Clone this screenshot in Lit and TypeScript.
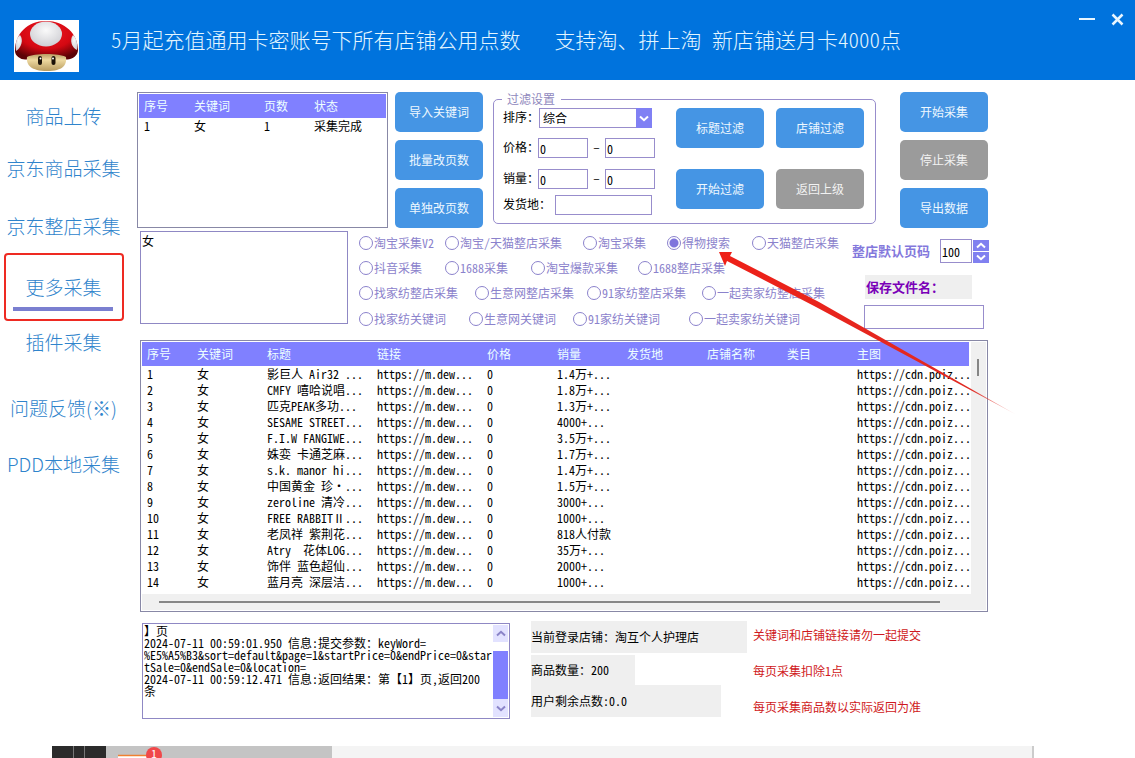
import { LitElement, html, css, svg } from "lit";
import { customElement, state } from "lit/decorators.js";

const NAV = ["商品上传", "京东商品采集", "京东整店采集", "更多采集", "插件采集", "问题反馈(※)", "PDD本地采集"];

const MODES: string[][] = [
  ["淘宝采集V2", "淘宝/天猫整店采集", "淘宝采集", "得物搜索", "天猫整店采集"],
  ["抖音采集", "1688采集", "淘宝爆款采集", "1688整店采集"],
  ["找家纺整店采集", "生意网整店采集", "91家纺整店采集", "一起卖家纺整店采集"],
  ["找家纺关键词", "生意网关键词", "91家纺关键词", "一起卖家纺关键词"],
];

const COLUMNS = ["序号", "关键词", "标题", "链接", "价格", "销量", "发货地", "店铺名称", "类目", "主图"];

const ITEMS: [string, string][] = [
  ["影巨人 Air32 ...", "1.4万+..."],
  ["CMFY 嘻哈说唱...", "1.8万+..."],
  ["匹克PEAK多功...", "1.3万+..."],
  ["SESAME STREET...", "4000+..."],
  ["F.I.W FANGIWE...", "3.5万+..."],
  ["姝娈 卡通芝麻...", "1.7万+..."],
  ["s.k. manor hi...", "1.4万+..."],
  ["中国黄金 珍・...", "1.5万+..."],
  ["zeroline 清冷...", "3000+..."],
  ["FREE RABBITⅡ...", "1000+..."],
  ["老凤祥 紫荆花...", "818人付款"],
  ["Atry  花体LOG...", "35万+..."],
  ["饰伴 蓝色超仙...", "2000+..."],
  ["蓝月亮 深层洁...", "1000+..."],
];

const LOG = `】页
2024-07-11 00:59:01.950 信息:提交参数：keyWord=
%E5%A5%B3&sort=default&page=1&startPrice=0&endPrice=0&star
tSale=0&endSale=0&location=
2024-07-11 00:59:12.471 信息:返回结果：第【1】页，返回200
条`;

const chevron = (up: boolean, color: string) => svg`
  <svg width="10" height="7" viewBox="0 0 10 7" aria-hidden="true">
    <path d=${up ? "M1 5.5 5 1.8 9 5.5" : "M1 1.5 5 5.2 9 1.5"} fill="none" stroke=${color} stroke-width="2"/>
  </svg>`;

@customElement("app-root")
export class AppRoot extends LitElement {
  @state() private mode = "得物搜索";

  static styles = css`
    :host {
      display: block;
      position: relative;
      overflow: hidden;
      background: #fff;
      color: #000;
      font-family: "Noto Sans CJK SC", sans-serif;
      font-size: 12px;
      line-height: 16px;
      font-feature-settings: "hwid";
      text-spacing-trim: space-all;
    }
    * { box-sizing: border-box; }
    input, select, textarea, button, legend {
      font: inherit;
      font-feature-settings: inherit;
      text-spacing-trim: inherit;
      color: inherit;
      margin: 0;
    }
    svg { display: block; }

    .titlebar {
      display: flex;
      align-items: center;
      height: 80px;
      padding-left: 14px;
      background: #0073dd;
      color: #e4f6ff;
    }
    .logo { margin-top: 12px; }
    .notice {
      display: flex;
      flex: 1;
      gap: 34px;
      margin-left: 32px;
      padding-bottom: 3px;
      font-size: 21px;
      font-weight: 300;
      line-height: 30px;
      white-space: nowrap;
    }
    .window {
      display: flex;
      align-self: flex-start;
      gap: 14px;
      padding: 10px 9px 0 0;
    }
    .window button { padding: 0; border: 0; background: none; }

    .body { display: flex; }
    .nav {
      display: grid;
      grid-template-rows: 52px 52px 64px 58px 52px 80px 32px;
      align-content: start;
      width: 127px;
      padding-top: 10px;
      font-size: 19px;
      font-weight: 300;
      font-feature-settings: normal;
    }
    .nav a {
      display: flex;
      align-items: center;
      justify-content: center;
      color: #2f84cc;
      text-decoration: none;
      white-space: nowrap;
    }
    .nav .current { position: relative; }
    .current::before {
      content: "";
      position: absolute;
      inset: -5px 3px -5px 4px;
      border: 2px solid #ee2a22;
      border-radius: 4px;
    }
    .current::after {
      content: "";
      position: absolute;
      inset: auto 14px 5px 13px;
      height: 4px;
      background: #7a7fd0;
    }

    .main { flex: 1; min-width: 0; padding: 12px 147px 0 10px; }
    .top { display: flex; height: 136px; }
    .stack { display: grid; gap: 8px; align-content: start; }
    .top .stack { margin-left: 7px; }
    .top .last { margin-left: 24px; }
    .btn {
      width: 88px;
      height: 40px;
      padding: 0;
      border: 0;
      border-radius: 5px;
      background: #4595e4;
      color: #eef8ff;
    }
    .btn.off { background: #9b9b9b; color: #f2f2f2; }

    .frame { border: 1px solid #8888a6; padding: 1px; background: #fff; }
    table { width: 100%; border-collapse: collapse; table-layout: fixed; }
    th {
      height: 24px;
      padding: 0 0 0 5px;
      background: #8080ff;
      color: #eeffff;
      font-weight: 400;
      text-align: left;
      white-space: nowrap;
    }
    td {
      height: 16px;
      padding: 0 0 0 5px;
      line-height: 16px;
      white-space: pre;
    }
    .keywords { flex: 1; min-width: 0; }
    .w50 { width: 50px; }
    .w70 { width: 70px; }
    .w80 { width: 80px; }
    .w110 { width: 110px; }

    .filter {
      display: flex;
      gap: 20px;
      width: 383px;
      height: 132px;
      margin: 0 0 0 10px;
      padding: 2px 10px 0 9px;
      border: 1px solid #988dcc;
      border-radius: 5px;
    }
    .filter legend {
      margin-left: -1px;
      padding: 0 6px 0 5px;
      line-height: 14px;
      color: #8f88bd;
    }
    .fields {
      display: grid;
      grid-template-rows: 30px 31px 26px 20px;
      width: 153px;
    }
    .field { display: flex; align-items: center; height: 20px; }
    .field label, .dash { padding-bottom: 3px; white-space: nowrap; }
    .dash { width: 17px; text-align: center; }
    .box {
      height: 20px;
      padding: 0 0 0 1px;
      border: 1px solid #988dcc;
      border-radius: 0;
      background: #fff;
      outline: 0;
    }
    .num { width: 50px; }
    .num.first { margin-left: -1px; }
    .place { width: 97px; margin-left: 4px; }
    .select {
      display: flex;
      align-items: center;
      justify-content: flex-end;
      position: relative;
      width: 113px;
      height: 20px;
    }
    .select select {
      position: absolute;
      inset: 0;
      width: 100%;
      padding-left: 3px;
      border: 1px solid #988dcc;
      border-radius: 0;
      background: #fff;
      appearance: none;
    }
    .arrow {
      display: grid;
      place-items: center;
      position: relative;
      width: 16px;
      height: 20px;
      background: #8080f4;
      pointer-events: none;
    }
    .actions {
      display: grid;
      grid-template: 40px 40px / 88px 88px;
      gap: 21px 12px;
      align-content: start;
    }

    .middle { display: flex; margin-top: 3px; padding-left: 3px; }
    .words {
      flex: 1;
      min-width: 0;
      height: 93px;
      padding: 1px;
      border: 1px solid #8f88c4;
      background: #fff;
      resize: none;
      outline: 0;
    }
    .modes {
      display: grid;
      grid-template-rows: 24px 25px 25px 28px;
      width: 493px;
      margin: 0 0 0 11px;
      padding: 0;
      border: 0;
      color: #8b82cc;
    }
    .modes .row { display: grid; align-items: center; }
    .r0 { grid-template-columns: 86px 138px 84px 85px auto; }
    .r1 { grid-template-columns: 86px 86px 107px auto; }
    .r2 { grid-template-columns: 116px 112px 115px auto; }
    .r3 { grid-template-columns: 110px 104px 116px auto; }
    .mode { display: flex; align-items: center; gap: 1px; white-space: nowrap; }
    .mode input {
      width: 14px;
      height: 14px;
      border: 1px solid #8b82cc;
      border-radius: 50%;
      background: #fff;
      appearance: none;
    }
    .mode input:checked { background: radial-gradient(circle, #7f74dc 0 4px, #fff 5px); }
    .save { width: 136px; padding-top: 8px; }
    .pages {
      display: flex;
      align-items: center;
      height: 24px;
      color: #8378dc;
      font-size: 13px;
      font-weight: 700;
      white-space: nowrap;
    }
    .pages input {
      width: 32px;
      height: 24px;
      margin-left: 10px;
      color: #000;
      font-size: 12px;
      font-weight: 400;
    }
    .spin { display: grid; gap: 1px; margin-left: 1px; }
    .spin button {
      display: grid;
      place-items: center;
      width: 16px;
      height: 11px;
      padding: 0;
      border: 0;
      background: #8080f0;
    }
    .filename {
      display: block;
      width: 107px;
      margin: 12px 0 6px 13px;
      padding-left: 1px;
      background: #efefef;
      color: #7a00b8;
      font-size: 13px;
      font-weight: 700;
      line-height: 24px;
    }
    .save .file { display: block; width: 120px; height: 24px; margin-left: 12px; }

    .result {
      display: grid;
      grid-template: 252px 16px / 1fr 17px;
      margin: 7px 0 0 3px;
    }
    .vbar { margin-left: 2px; padding: 17px 6px 0; background: #f0f0f0; }
    .hbar { grid-column: span 2; padding: 7px 46px 0 17px; background: #f0f0f0; }
    .thumb { background: #868686; }
    .vbar .thumb { width: 2px; height: 17px; }
    .hbar .thumb { height: 2px; }

    .bottom { display: flex; margin-top: 9px; padding-left: 5px; }
    .log {
      display: flex;
      width: 368px;
      height: 96px;
      margin-top: 2px;
      padding: 1px;
      border: 1px solid #8f88c4;
    }
    .log textarea {
      flex: 1;
      min-width: 0;
      height: 92px;
      padding: 0;
      border: 0;
      background: #fff;
      line-height: 12px;
      white-space: pre;
      overflow: hidden;
      resize: none;
      outline: 0;
    }
    .bar { display: grid; grid-template-rows: 17px 9px 48px 18px; width: 15px; }
    .bar button { display: grid; place-items: center; padding: 0; border: 0; background: #e2e2ff; }
    .bar .grip { grid-row: 3; background: #8080ff; }
    .bar .down { grid-row: 4; }
    .info { width: 216px; margin-left: 21px; }
    .info p { margin: 0; background: #efefef; line-height: 32px; }
    .info .count { width: 104px; margin-top: 2px; line-height: 30px; }
    .info .points { width: 190px; }
    .tips { margin-left: 6px; color: #cf1820; line-height: 36px; white-space: nowrap; }
    .tips p { margin: 0; }
    .tips p:first-child { margin-top: -4px; }

    .strip {
      display: flex;
      height: 12px;
      margin: 21px 101px 0 52px;
      border-right: 2px solid #cccccc;
      background: #f4f4f4;
    }
    .dark { display: flex; gap: 1px; width: 54px; background: #777; }
    .dark i { flex: 1; background: #2b2b2b; }
    .dark i:first-child, .dark i:last-child { flex: 2; }
    .grey { width: 226px; padding-left: 12px; background: #c4c4c4; }
    .pointer { position: absolute; left: 715px; top: 247px; pointer-events: none; }
  `;

  private button(label: string, off = false) {
    return html`<button class="btn ${off ? "off" : ""}" type="button">${label}</button>`;
  }

  private logo() {
    return html`<svg class="logo" width="65" height="52" viewBox="0 0 65 52" role="img" aria-label="蘑菇">
      <defs>
        <radialGradient id="cap" cx="50%" cy="30%" r="70%">
          <stop offset="0" stop-color="#f01a22"/><stop offset=".6" stop-color="#d40812"/><stop offset="1" stop-color="#5c0206"/>
        </radialGradient>
        <radialGradient id="spot" cx="50%" cy="35%" r="65%">
          <stop offset="0" stop-color="#fafafa"/><stop offset="1" stop-color="#cfcfd4"/>
        </radialGradient>
        <linearGradient id="stem" x1="0" y1="0" x2="0" y2="1">
          <stop offset="0" stop-color="#b89c62"/><stop offset=".35" stop-color="#eed9a0"/><stop offset="1" stop-color="#b89c60"/>
        </linearGradient>
      </defs>
      <rect width="65" height="52" fill="#fff"/>
      <path d="M1 31C1 14 13 1 32 1S64 14 64 30C64 37 55 41 51 39C44 34 21 34 14 39C9 41 1 37 1 31Z" fill="url(#cap)"/>
      <path d="M13 37C12 45 17 51 33 51S53 45 52 37C45 33 20 33 13 37Z" fill="url(#stem)"/>
      <ellipse cx="32" cy="14" rx="16" ry="12.5" fill="url(#spot)"/>
      <path d="M2 31C1 22 3 17 6 15C10 20 7 28 2 31Z" fill="url(#spot)"/>
      <path d="M63 30C64 23 62 17 59 15C55 20 58 28 63 30Z" fill="url(#spot)"/>
      <rect x="24" y="36" width="4" height="9" rx="2" fill="#1c1208"/>
      <rect x="37.500" y="36" width="4" height="9" rx="2" fill="#1c1208"/>
      <circle cx="26.500" cy="38.500" r="1" fill="#fff"/><circle cx="39" cy="38.500" r="1" fill="#fff"/>
    </svg>`;
  }

  render() {
    return html`
      <header class="titlebar">
        ${this.logo()}
        <div class="notice">
          <span>5月起充值通用卡密账号下所有店铺公用点数</span>
          <span>支持淘、拼上淘 新店铺送月卡4000点</span>
        </div>
        <div class="window">
          <button type="button" aria-label="最小化">
            <svg width="18" height="18" viewBox="0 0 18 18"><path d="M1 9h16" stroke="#e8f6ff" stroke-width="2"/></svg>
          </button>
          <button type="button" aria-label="关闭">
            <svg width="16" height="18" viewBox="0 0 16 18"><path d="M2.500 4.500l10 10m0-10l-10 10" stroke="#e8f6ff" stroke-width="2.500"/></svg>
          </button>
        </div>
      </header>

      <div class="body">
        <nav class="nav">
          ${NAV.map((n) => html`<a href="#" class=${n === "更多采集" ? "current" : ""}>${n}</a>`)}
        </nav>

        <main class="main">
          <section class="top">
            <div class="frame keywords">
              <table>
                <thead><tr><th class="w50">序号</th><th class="w70">关键词</th><th class="w50">页数</th><th>状态</th></tr></thead>
                <tbody><tr><td>1</td><td>女</td><td>1</td><td>采集完成</td></tr></tbody>
              </table>
            </div>
            <div class="stack">
              ${this.button("导入关键词")} ${this.button("批量改页数")} ${this.button("单独改页数")}
            </div>
            <fieldset class="filter">
              <legend>过滤设置</legend>
              <div class="fields">
                <div class="field">
                  <label for="sort">排序：</label>
                  <span class="select">
                    <select id="sort"><option>综合</option></select>
                    <span class="arrow">${chevron(false, "#fff")}</span>
                  </span>
                </div>
                <div class="field">
                  <label for="price">价格：</label>
                  <input id="price" class="box num first" value="0" />
                  <span class="dash">–</span>
                  <input class="box num" value="0" aria-label="最高价格" />
                </div>
                <div class="field">
                  <label for="sale">销量：</label>
                  <input id="sale" class="box num first" value="0" />
                  <span class="dash">–</span>
                  <input class="box num" value="0" aria-label="最高销量" />
                </div>
                <div class="field">
                  <label for="place">发货地：</label>
                  <input id="place" class="box place" />
                </div>
              </div>
              <div class="actions">
                ${this.button("标题过滤")} ${this.button("店铺过滤")}
                ${this.button("开始过滤")} ${this.button("返回上级", true)}
              </div>
            </fieldset>
            <div class="stack last">
              ${this.button("开始采集")} ${this.button("停止采集", true)} ${this.button("导出数据")}
            </div>
          </section>

          <section class="middle">
            <textarea class="words" aria-label="关键词列表" .value=${"女"}></textarea>
            <fieldset class="modes" aria-label="采集方式">
              ${MODES.map((row, i) => html`<div class="row r${i}">
                ${row.map((m) => html`<label class="mode">
                  <input type="radio" name="mode" .checked=${m === this.mode} @change=${() => (this.mode = m)} />${m}
                </label>`)}
              </div>`)}
            </fieldset>
            <div class="save">
              <div class="pages">
                <label for="pages">整店默认页码</label>
                <input id="pages" class="box" value="100" />
                <span class="spin">
                  <button type="button" aria-label="增加">${chevron(true, "#fff")}</button>
                  <button type="button" aria-label="减少">${chevron(false, "#fff")}</button>
                </span>
              </div>
              <label class="filename" for="file">保存文件名：</label>
              <input id="file" class="box file" />
            </div>
          </section>

          <section class="frame result">
            <div>
              <table>
                <colgroup>
                  <col class="w50" /><col class="w70" /><col class="w110" /><col class="w110" /><col class="w70" />
                  <col class="w70" /><col class="w80" /><col class="w80" /><col class="w70" /><col />
                </colgroup>
                <thead><tr>${COLUMNS.map((c) => html`<th>${c}</th>`)}</tr></thead>
                <tbody>
                  ${ITEMS.map(([title, sales], i) => html`<tr>
                    <td>${i + 1}</td><td>女</td><td>${title}</td><td>https://m.dew...</td><td>0</td>
                    <td>${sales}</td><td></td><td></td><td></td><td>https://cdn.poiz...</td>
                  </tr>`)}
                </tbody>
              </table>
            </div>
            <div class="vbar"><div class="thumb"></div></div>
            <div class="hbar"><div class="thumb"></div></div>
          </section>

          <section class="bottom">
            <div class="log">
              <textarea readonly aria-label="日志" .value=${LOG}></textarea>
              <div class="bar">
                <button type="button" aria-label="向上">${chevron(true, "#8a84c8")}</button>
                <span class="grip"></span>
                <button class="down" type="button" aria-label="向下">${chevron(false, "#8a84c8")}</button>
              </div>
            </div>
            <div class="info">
              <p>当前登录店铺：淘互个人护理店</p>
              <p class="count">商品数量：200</p>
              <p class="points">用户剩余点数:0.0</p>
            </div>
            <div class="tips">
              <p>关键词和店铺链接请勿一起提交</p>
              <p>每页采集扣除1点</p>
              <p>每页采集商品数以实际返回为准</p>
            </div>
          </section>
        </main>
      </div>

      <div class="strip">
        <div class="dark"><i></i><i></i><i></i></div>
        <div class="grey">
          <svg width="50" height="12" viewBox="0 0 50 12" aria-hidden="true">
            <path d="M0 9.500h30V20H0z" fill="#fff"/><path d="M0 9.500h30" stroke="#f08030" stroke-width="1.500"/>
            <circle cx="36" cy="9" r="8" fill="#f0484a"/>
            <text x="36" y="12" text-anchor="middle" fill="#fff" font-size="11">1</text>
          </svg>
        </div>
      </div>

      <svg class="pointer" width="305" height="170" viewBox="0 0 305 170" aria-hidden="true">
        <defs>
          <linearGradient id="fade" x1="0" y1="0" x2="1" y2="0">
            <stop offset="0" stop-color="#ee2018"/><stop offset=".85" stop-color="#e02a22"/><stop offset="1" stop-color="#e02a22" stop-opacity=".2"/>
          </linearGradient>
        </defs>
        <path d="M4 5 17 5 15 9 104 55 300 167 101 60 12 14 10 19Z" fill="url(#fade)"/>
      </svg>
    `;
  }
}
